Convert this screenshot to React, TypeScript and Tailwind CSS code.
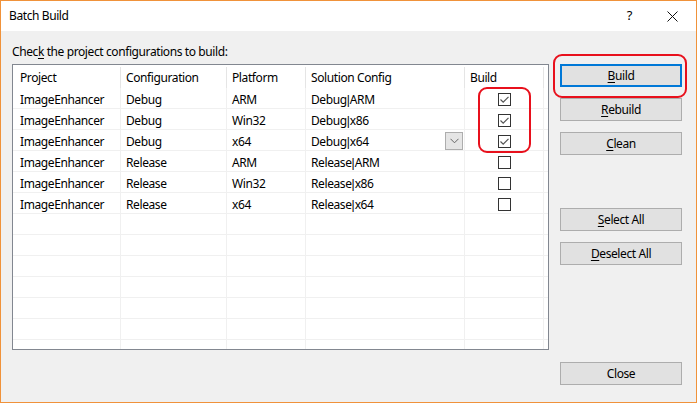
import React from "react";

const rows = [
  ["ImageEnhancer", "Debug", "ARM", "Debug", "ARM", true],
  ["ImageEnhancer", "Debug", "Win32", "Debug", "x86", true],
  ["ImageEnhancer", "Debug", "x64", "Debug", "x64", true],
  ["ImageEnhancer", "Release", "ARM", "Release", "ARM", false],
  ["ImageEnhancer", "Release", "Win32", "Release", "x86", false],
  ["ImageEnhancer", "Release", "x64", "Release", "x64", false],
] as const;

function CheckBox({ checked }: { checked: boolean }) {
  return (
    <span className="flex h-[13px] w-[13px] items-center justify-center border border-[#333333] bg-white">
      {checked && (
        <svg width="11" height="11" viewBox="0 0 11 11">
          <path d="M1.5 5.5 L4.2 8.2 L9.5 2.8" fill="none" stroke="#555555" strokeWidth="1.2" />
        </svg>
      )}
    </span>
  );
}

function Button({
  children,
  primary,
}: {
  children: React.ReactNode;
  primary?: boolean;
}) {
  return (
    <button
      className={
        primary
          ? "flex h-[23px] w-[122px] items-center justify-center border-2 border-[#0078d7] bg-[#e1e1e1] text-[12px] tracking-[-0.4px] text-black"
          : "flex h-[23px] w-[122px] items-center justify-center border border-[#adadad] bg-[#e1e1e1] text-[12px] tracking-[-0.4px] text-black"
      }
    >
      {children}
    </button>
  );
}

export default function App() {
  const empty = Array.from({ length: 7 });

  return (
    <div
      className="relative flex h-[403px] w-[697px] flex-col border border-[#f0923a] bg-[#f0f0f0] text-[12px] tracking-[-0.4px] text-black"
      style={{ fontFamily: '"Noto Sans", "Liberation Sans", sans-serif' }}
    >
      {/* title bar */}
      <div className="flex h-[30px] items-center bg-white">
        <span className="ml-[8px] pb-[1px]">Batch Build</span>
        <span className="ml-auto mr-[35px] text-[13px]">?</span>
        <svg className="mr-[18px]" width="11" height="11" viewBox="0 0 11 11">
          <path d="M0.5 0.5 L10.5 10.5 M10.5 0.5 L0.5 10.5" stroke="#111111" strokeWidth="1" />
        </svg>
      </div>

      <div className="flex flex-1 pl-[11px]">
        <div className="flex w-[537px] flex-col">
          <div className="mt-[11px] flex h-[22px] items-center pb-[2px]">
            <span>
              Chec<span className="underline underline-offset-2">k</span> the project configurations to build:
            </span>
          </div>

          {/* grid */}
          <div className="h-[286px] overflow-hidden border border-[#828790] bg-white">
            <div className="flex h-[23px] items-center pt-[2px]">
              <div className="flex h-full w-[108px] items-center border-r border-[#e5e5e5] pl-[7px]">Project</div>
              <div className="flex h-full w-[106px] items-center border-r border-[#e5e5e5] pl-[5px]">Configuration</div>
              <div className="flex h-full w-[79px] items-center border-r border-[#e5e5e5] pl-[5px]">Platform</div>
              <div className="flex h-full w-[159px] items-center border-r border-[#e5e5e5] pl-[5px]">Solution Config</div>
              <div className="flex h-full w-[79px] items-center border-r border-[#e5e5e5] pl-[5px]">Build</div>
            </div>

            {rows.map(([project, config, platform, solA, solB, checked], i) => (
              <div key={i} className="flex h-[21px] border-b border-[#f0f0f0]">
                <div className="flex w-[108px] items-center border-r border-[#f0f0f0] pl-[7px] pt-[3px]">{project}</div>
                <div className="flex w-[106px] items-center border-r border-[#f0f0f0] pl-[5px] pt-[3px]">{config}</div>
                <div className="flex w-[79px] items-center border-r border-[#f0f0f0] pl-[5px] pt-[3px]">{platform}</div>
                <div className="flex w-[159px] items-center border-r border-[#f0f0f0] pl-[5px]">
                  <span className="pt-[3px]">
                    {solA}
                    <span className="tracking-normal" style={{ fontFamily: '"Liberation Sans", sans-serif' }}>|</span>
                    {solB}
                  </span>
                  {i === 2 && (
                    <span className="ml-auto mr-[1px] mt-[2px] flex h-[18px] w-[18px] items-center justify-center border border-[#adadad] bg-[#e5e5e5]">
                      <svg width="9" height="6" viewBox="0 0 9 6">
                        <path d="M0.5 0.8 L4.5 4.8 L8.5 0.8" fill="none" stroke="#666666" strokeWidth="1" />
                      </svg>
                    </span>
                  )}
                </div>
                <div className="flex w-[79px] items-center justify-center border-r border-[#f0f0f0] pl-[1px] pt-[3px]">
                  <CheckBox checked={checked} />
                </div>
              </div>
            ))}

            {empty.map((_, i) => (
              <div key={i} className="flex h-[21px] border-b border-[#f0f0f0]">
                <div className="w-[108px] border-r border-[#f0f0f0]" />
                <div className="w-[106px] border-r border-[#f0f0f0]" />
                <div className="w-[79px] border-r border-[#f0f0f0]" />
                <div className="w-[159px] border-r border-[#f0f0f0]" />
                <div className="w-[79px] border-r border-[#f0f0f0]" />
              </div>
            ))}
          </div>
        </div>

        {/* buttons */}
        <div className="ml-[11px] flex flex-col pt-[33px]">
          <div className="flex flex-col gap-[11px]">
            <Button primary>
              <span className="underline underline-offset-2">B</span>uild
            </Button>
            <Button>
              <span className="underline underline-offset-2">R</span>ebuild
            </Button>
            <Button>
              <span className="underline underline-offset-2">C</span>lean
            </Button>
          </div>
          <div className="mt-[53px] flex flex-col gap-[11px]">
            <Button>
              <span className="underline underline-offset-2">S</span>elect All
            </Button>
            <Button>
              <span className="underline underline-offset-2">D</span>eselect All
            </Button>
          </div>
          <div className="mt-[97px]">
            <Button>Close</Button>
          </div>
        </div>
      </div>

      {/* red annotation marks */}
      <div className="pointer-events-none absolute left-[477px] top-[86px] h-[66px] w-[53px] rounded-[9px] border-2 border-[#e8101c]" />
      <div className="pointer-events-none absolute left-[552px] top-[53px] h-[44px] w-[134px] rounded-[9px] border-2 border-[#e8101c]" />
    </div>
  );
}
